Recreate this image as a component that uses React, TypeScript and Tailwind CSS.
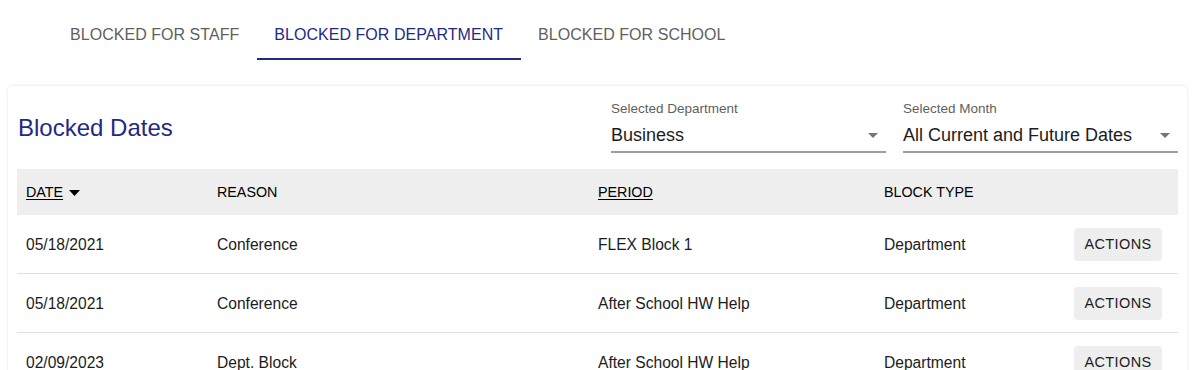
import React from "react";

const rows = [
  { date: "05/18/2021", reason: "Conference", period: "FLEX Block 1", type: "Department" },
  { date: "05/18/2021", reason: "Conference", period: "After School HW Help", type: "Department" },
  { date: "02/09/2023", reason: "Dept. Block", period: "After School HW Help", type: "Department" },
];

function Caret({ color = "#757575" }: { color?: string }) {
  return (
    <svg width="10" height="5" viewBox="0 0 10 5" className="shrink-0">
      <path d="M0 0 L10 0 L5 5 Z" fill={color} />
    </svg>
  );
}

function SelectField({ label, value }: { label: string; value: string }) {
  return (
    <div className="w-[275px] flex flex-col">
      <div className="text-[13.5px] leading-[16px] text-[#5f5f5f]">{label}</div>
      <div className="flex items-center justify-between pt-[6px] pb-[4px] border-b-2 border-[#9e9e9e]">
        <span className="text-[18px] leading-[24px] text-[#1c1c1c]">{value}</span>
        <span className="mr-[8px]">
          <Caret />
        </span>
      </div>
    </div>
  );
}

export default function App() {
  return (
    <div
      className="w-[1200px] h-[370px] overflow-hidden bg-white"
      style={{ fontFamily: "'Liberation Sans', Arial, Helvetica, sans-serif" }}
    >
      {/* Tabs */}
      <div className="flex pt-[11px] pl-[52.5px]">
        <div className="h-[49px] px-[17.5px] flex items-center text-[16px] tracking-[0.04px] text-[#5f5f5f] border-b-2 border-transparent">
          BLOCKED FOR STAFF
        </div>
        <div className="h-[49px] px-[17.5px] flex items-center text-[16px] tracking-[0.04px] text-[#1f2a85] border-b-2 border-[#1f2a85]">
          BLOCKED FOR DEPARTMENT
        </div>
        <div className="h-[49px] px-[17.5px] flex items-center text-[16px] tracking-[0.04px] text-[#5f5f5f] border-b-2 border-transparent">
          BLOCKED FOR SCHOOL
        </div>
      </div>

      {/* Card */}
      <div className="mt-[26px] mx-[8px] w-[1179px] rounded-[4px] bg-white shadow-[0_0_3px_rgba(0,0,0,0.14)] px-[9px] pt-[15px] pb-[20px]">
        <div className="flex items-center justify-between pl-[1px]">
          <div className="pt-[2px] text-[24px] leading-[32px] text-[#1f2a85]">Blocked Dates</div>
          <div className="flex gap-[17px]">
            <SelectField label="Selected Department" value="Business" />
            <SelectField label="Selected Month" value="All Current and Future Dates" />
          </div>
        </div>

        {/* Table */}
        <div className="mt-[16px]">
          <div className="flex items-center h-[46px] pt-[2px] bg-[#eeeeee] text-[14.3px] text-black">
            <div className="w-[191px] pl-[9px] flex items-center gap-[6px]">
              <span className="underline underline-offset-[2px]">DATE</span>
              <svg width="11" height="6" viewBox="0 0 11 6">
                <path d="M0 0 L11 0 L5.5 6 Z" fill="#000" />
              </svg>
            </div>
            <div className="w-[381px] pl-[9px]">REASON</div>
            <div className="w-[286px] pl-[9px]">
              <span className="underline underline-offset-[2px]">PERIOD</span>
            </div>
            <div className="flex-1 pl-[9px]">BLOCK TYPE</div>
          </div>
          {rows.map((r, i) => (
            <div
              key={i}
              className="flex items-center h-[59px] pt-[1px] border-b border-[#e0e0e0] text-[15.6px] text-[#1c1c1c]"
            >
              <div className="w-[191px] pl-[9px]">{r.date}</div>
              <div className="w-[381px] pl-[9px]">{r.reason}</div>
              <div className="w-[286px] pl-[9px]">{r.period}</div>
              <div className="flex-1 pl-[9px]">{r.type}</div>
              <div className="pr-[16px]">
                <button className="w-[88px] h-[33px] rounded-[4px] bg-[#eeeeee] text-[14.5px] tracking-[0.4px] text-[#1c1c1c]">
                  ACTIONS
                </button>
              </div>
            </div>
          ))}
        </div>
      </div>
    </div>
  );
}
